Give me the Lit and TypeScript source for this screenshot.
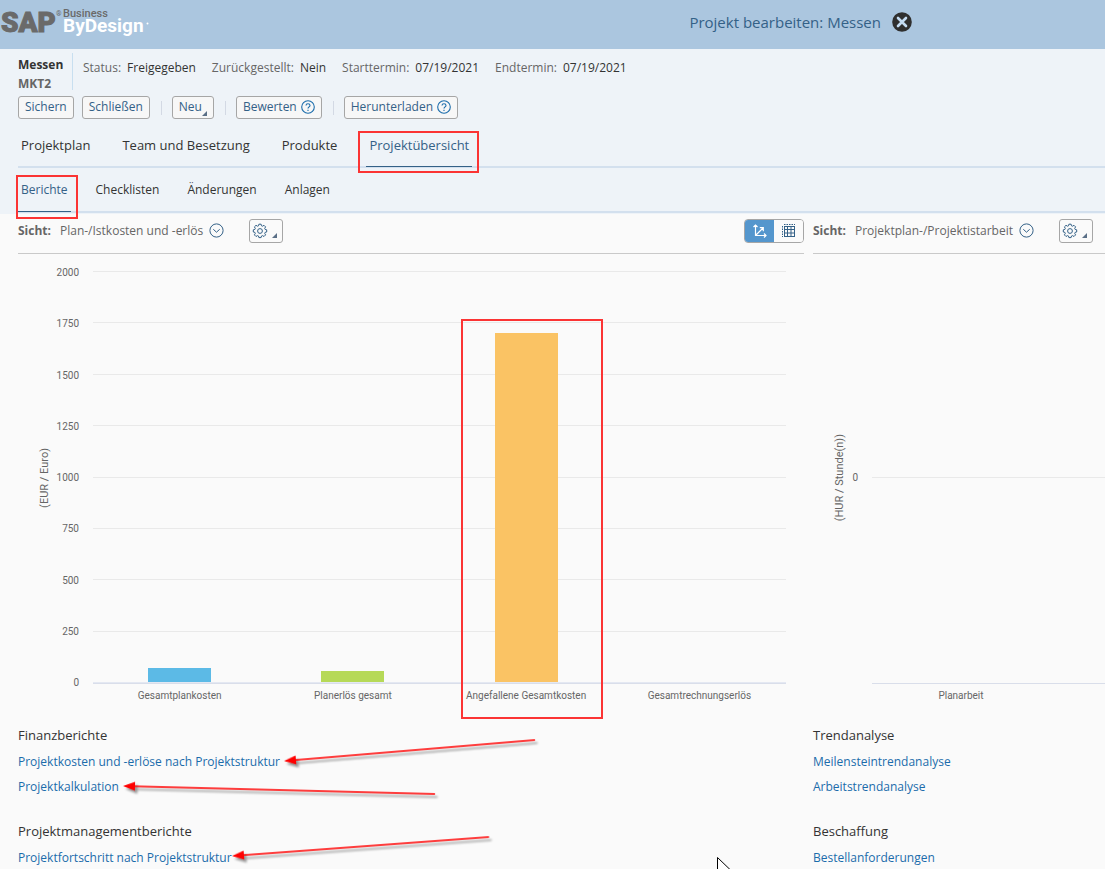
import { LitElement, html, css, svg } from "lit";
import { customElement, property } from "lit/decorators.js";
import { classMap } from "lit/directives/class-map.js";

const tick = svg`<path d="M5 0V5H0Z" fill="#5a6f86"/>`;

const gearIcon = html`<svg width="16" height="16" viewBox="0 0 16 16" fill="none" stroke="#346187" stroke-width="1" aria-hidden="true">
  <path stroke-linejoin="round" d="M6.9 1.2h2.2l.4 1.6 1 .4 1.5-.9 1.6 1.6-.9 1.5.4 1 1.6.4v2.2l-1.6.4-.4 1 .9 1.5-1.6 1.6-1.5-.9-1 .4-.4 1.6H6.9l-.4-1.6-1-.4-1.5.9-1.6-1.6.9-1.5-.4-1-1.6-.4V6.8l1.6-.4.4-1-.9-1.5L4 2.3l1.5.9 1-.4z"/>
  <circle cx="8" cy="8" r="2.4"/>
</svg>`;

const helpIcon = html`<svg width="14" height="14" viewBox="0 0 14 14" fill="none" stroke="#1b6cab" stroke-width="1.1" aria-hidden="true">
  <circle cx="7" cy="7" r="6.3"/>
  <path d="M5 5.4C5 3.2 9 3.2 9 5.4C9 6.8 7 6.9 7 8.5M7 9.7v1.2"/>
</svg>`;

const chevronIcon = html`<svg width="15" height="15" viewBox="0 0 15 15" fill="none" stroke="#346187" stroke-width="1" aria-hidden="true">
  <circle cx="7.5" cy="7.5" r="6.6"/>
  <path d="M4.3 6.3l3.2 2.9 3.2-2.9"/>
</svg>`;

interface Bar {
  name: string;
  value: number;
  color: string;
  marked?: boolean;
}

@customElement("bar-chart")
export class BarChart extends LitElement {
  @property({ attribute: false }) ticks: string[] = [];
  @property({ attribute: false }) bars: Bar[] = [];
  @property({ type: Number }) max = 1;
  @property() unit = "";
  @property({ type: Boolean, reflect: true }) fixed = false;

  static styles = css`
    :host {
      display: grid;
      grid-template-columns: 61px 1fr;
      font: 10px/12px Roboto, "Liberation Sans", sans-serif;
      color: #666;
      padding: 12px 18px 0 0;
    }
    :host([fixed]) { grid-template-columns: 45px 1fr; padding-right: 0; }
    .axis { display: grid; grid-template-columns: 1fr auto; align-self: start; padding-top: 1px; }
    .unit { writing-mode: vertical-rl; transform: rotate(180deg); justify-self: end; align-self: center; margin-right: 6px; white-space: nowrap; font-size: 11px; }
    .ticks { height: 422px; display: flex; flex-direction: column; justify-content: space-between; text-align: right; }
    .ticks.single { justify-content: center; }
    .plot { margin: 5px 0 0 14px; min-width: 0; }
    .area { display: grid; height: 412px; border-bottom: 1px solid #d9deea; }
    .lines, .bars { grid-area: 1 / 1; }
    .lines { display: flex; flex-direction: column; justify-content: space-between; }
    .lines.single { justify-content: center; }
    .line { height: 1px; background: #e9e9e9; }
    .line.base { background: #e4e8f2; }
    .bars, .names { display: grid; grid-auto-flow: column; grid-auto-columns: 1fr; }
    :host([fixed]) .names { grid-auto-columns: 178px; }
    .bars { align-items: end; justify-items: center; position: relative; padding-bottom: 1px; }
    .bar { width: 63px; }
    .name { text-align: center; position: relative; padding-top: 6px; white-space: nowrap; }
    .mark { position: absolute; left: 50%; margin-left: -65px; bottom: -17px; width: 138px; height: 396px; border: 2px solid #fb3434; pointer-events: none; }
  `;

  render() {
    const single = this.ticks.length === 1;
    return html`
      <div class="axis">
        <span class="unit">${this.unit}</span>
        <div class=${classMap({ ticks: true, single })}>${this.ticks.map((t) => html`<span>${t}</span>`)}</div>
      </div>
      <div class="plot">
        <div class="area">
          <div class=${classMap({ lines: true, single })}>
            ${this.ticks.map((t, i) => html`<div class=${classMap({ line: true, base: !single && i === this.ticks.length - 1 })}></div>`)}
          </div>
          <div class="bars">
            ${this.bars.map((b) => html`<div class="bar" style="height:${(b.value / this.max) * 100}%;background:${b.color}"></div>`)}
          </div>
        </div>
        <div class="names">
          ${this.bars.map((b) => html`<div class="name">${b.name}${b.marked ? html`<span class="mark"></span>` : ""}</div>`)}
        </div>
      </div>
    `;
  }
}

@customElement("report-links")
export class ReportLinks extends LitElement {
  @property() heading = "";
  @property({ attribute: false }) links: string[] = [];

  static styles = css`
    :host { display: block; color: #333; }
    h2 { margin: 0; font-size: 13px; line-height: 20px; font-weight: 400; }
    ul { list-style: none; margin: 4px 0 0; padding: 0; }
    li { line-height: 25px; white-space: nowrap; }
    a { color: #1b6cab; text-decoration: none; font-size: 12px; }
  `;

  render() {
    return html`<h2>${this.heading}</h2>
      <ul>${this.links.map((l) => html`<li><a href="#">${l}</a></li>`)}</ul>`;
  }
}

@customElement("app-root")
export class AppRoot extends LitElement {
  static styles = css`
    * { box-sizing: border-box; }
    :host {
      display: block;
      position: relative;
      height: 100vh;
      overflow: hidden;
      background: #fafafa;
      color: #333;
      font: 12px/18px "Open Sans", "Liberation Sans", sans-serif;
    }
    button { font: inherit; margin: 0; cursor: pointer; }
    svg { display: block; flex: none; }
    .shell { height: 49px; background: #abc6df; display: flex; justify-content: space-between; }
    .title { display: flex; align-items: center; gap: 11px; height: 44px; margin-right: 193px; }
    h1 { margin: 0; font-size: 15px; font-weight: 400; color: #346187; }
    .close { border: 0; padding: 0; background: none; }
    .head { background: #eef3f8; padding: 4px 0 0 18px; height: 165px; }
    .info { display: flex; height: 37px; }
    .ident { width: 55px; border-right: 1px solid #c8dff0; font-weight: 700; line-height: 19px; padding-top: 2px; }
    .sub { color: #666; }
    dl { display: flex; gap: 16px; margin: 6px 0 0 10px; }
    dl div { display: flex; gap: 6px; }
    dt { color: #666; }
    dd { margin: 0; }
    .actions { display: flex; gap: 8px; margin-top: 6px; align-items: center; }
    .btn { height: 23px; border: 1px solid #a6a6a6; border-radius: 3px; background: #f7f7f7; color: #346187; padding: 0 6px 2px; display: flex; align-items: center; gap: 4px; }
    .btn .tick { align-self: flex-end; margin-left: -4px; }
    .sep { width: 1px; height: 14px; background: #d3d9e4; margin: 0 2px 0 3px; }
    .tabs { display: flex; border-bottom: 2px solid #d3e0ee; }
    .tab { position: relative; color: #333; text-decoration: none; padding: 0 3px; }
    .tab.on { color: #346187; }
    .tab.on::after { content: ""; position: absolute; left: 0; right: 0; bottom: -1px; height: 1px; background: #346187; }
    .main { height: 49px; gap: 26px; font-size: 13px; line-height: 52px; }
    .second { height: 45px; gap: 22px; line-height: 44px; }
    .mark { position: absolute; border: 2px solid #fb3434; pointer-events: none; }
    .main .mark { inset: 12px -7px -7px -8px; }
    .second .mark { inset: 7px -7px -8px -2px; }
    .panels { display: grid; grid-template-columns: minmax(0, 786fr) minmax(0, 292fr); column-gap: 9px; padding-left: 18px; }
    .bar { height: 40px; display: flex; align-items: center; padding-bottom: 6px; border-bottom: 1px solid #c9c9c9; color: #666; white-space: nowrap; }
    .bar > b { margin-right: 9px; }
    .view { border: 0; padding: 0; background: none; color: #666; display: flex; align-items: center; gap: 6px; }
    .gear { width: 34px; height: 24px; margin-left: 25px; padding: 0 5px 0 2px; border: 1px solid #a6a6a6; border-radius: 3px; background: #fafafa; display: flex; align-items: center; justify-content: space-between; }
    .gear .tick { align-self: flex-end; margin-bottom: 4px; }
    .switch { display: flex; margin-left: auto; width: 60px; height: 24px; border: 1px solid #a6a6a6; border-radius: 4px; overflow: hidden; }
    .switch button { flex: 1; border: 0; padding: 0; background: #fafafa; display: grid; place-items: center; }
    .switch .on { background: #5496cd; }
    .groups { display: flex; flex-direction: column; gap: 22px; margin-top: 23px; }
    .arrows { position: absolute; left: 0; top: 725px; pointer-events: none; }
  `;

  private gear() {
    return html`<button class="gear" aria-label="Einstellungen">${gearIcon}<svg class="tick" width="5" height="5">${tick}</svg></button>`;
  }

  private arrow(x1: number, y1: number, x2: number, y2: number) {
    const d = Math.hypot(x2 - x1, y2 - y1);
    const a = (Math.atan2(y2 - y1, x2 - x1) * 180) / Math.PI;
    return svg`<g transform="translate(${x1} ${y1}) rotate(${a})"><path d="M0 0L12 -4.5V-.8H${d}V.8H12V4.5Z"/></g>`;
  }

  render() {
    const cost: Bar[] = [
      { name: "Gesamtplankosten", value: 68, color: "#5cbae6" },
      { name: "Planerlös gesamt", value: 54, color: "#b6d957" },
      { name: "Angefallene Gesamtkosten", value: 1697, color: "#fac364", marked: true },
      { name: "Gesamtrechnungserlös", value: 0, color: "#8cd3ff" },
    ];
    const costTicks = ["2000", "1750", "1500", "1250", "1000", "750", "500", "250", "0"];
    return html`
      <header class="shell">
        <svg width="160" height="49" viewBox="0 0 160 49" font-family="Roboto, sans-serif" font-weight="700" role="img" aria-label="SAP Business ByDesign">
          <text x="1" y="32" font-size="28" font-weight="900" fill="#6a6a6a" stroke="#6a6a6a" stroke-width="1">SAP</text>
          <text x="56" y="16" font-size="7" fill="#6a6a6a">®</text>
          <text x="63" y="17" font-size="11" font-weight="500" fill="#6a6a6a">Business</text>
          <text x="63" y="32" font-size="19" fill="#fff">ByDesign</text>
          <circle cx="147.5" cy="23.5" r="1" fill="#fff"/>
        </svg>
        <div class="title">
          <h1>Projekt bearbeiten: Messen</h1>
          <button class="close" aria-label="Schließen">
            <svg width="20" height="20" viewBox="0 0 20 20"><circle cx="10" cy="10" r="9.8" fill="#2f2f2f"/><path d="M6 6l8 8M14 6l-8 8" stroke="#c4dcf2" stroke-width="2.6" stroke-linecap="round"/></svg>
          </button>
        </div>
      </header>
      <section class="head">
        <div class="info">
          <div class="ident"><div>Messen</div><div class="sub">MKT2</div></div>
          <dl>
            <div><dt>Status:</dt><dd>Freigegeben</dd></div>
            <div><dt>Zurückgestellt:</dt><dd>Nein</dd></div>
            <div><dt>Starttermin:</dt><dd>07/19/2021</dd></div>
            <div><dt>Endtermin:</dt><dd>07/19/2021</dd></div>
          </dl>
        </div>
        <div class="actions">
          <button class="btn">Sichern</button>
          <button class="btn">Schließen</button>
          <span class="sep"></span>
          <button class="btn">Neu<svg class="tick" width="5" height="5">${tick}</svg></button>
          <span class="sep"></span>
          <button class="btn">Bewerten ${helpIcon}</button>
          <span class="sep"></span>
          <button class="btn">Herunterladen ${helpIcon}</button>
        </div>
        <nav class="tabs main">
          <a class="tab" href="#">Projektplan</a>
          <a class="tab" href="#">Team und Besetzung</a>
          <a class="tab" href="#">Produkte</a>
          <a class="tab on" href="#">Projektübersicht<span class="mark"></span></a>
        </nav>
        <nav class="tabs second">
          <a class="tab on" href="#">Berichte<span class="mark"></span></a>
          <a class="tab" href="#">Checklisten</a>
          <a class="tab" href="#">Änderungen</a>
          <a class="tab" href="#">Anlagen</a>
        </nav>
      </section>
      <main class="panels">
        <section>
          <div class="bar">
            <b>Sicht:</b>
            <button class="view">Plan-/Istkosten und -erlös ${chevronIcon}</button>
            ${this.gear()}
            <div class="switch">
              <button class="on" aria-label="Diagramm">
                <svg width="16" height="16" viewBox="0 0 16 16" fill="none" stroke="#fff" stroke-width="1.2"><path d="M3.5 2V12.5H14M1.5 4L3.5 2L5.5 4M12 10.5L14 12.5L12 14.5M3.5 12.5L11 5M7.8 4.7H11.3V8.2"/></svg>
              </button>
              <button aria-label="Tabelle">
                <svg width="15" height="15" viewBox="0 0 15 15" fill="none" stroke="#346187"><path d="M3.5 3V13.5M6.5 3V14M10 3V14M13.5 3V14M3 6.5H14M3 10H14M3 3.5H14M3 13.5H14"/><path stroke-dasharray="1.5 1" d="M1.5 3V14M3 1.5H14"/></svg>
              </button>
            </div>
          </div>
          <bar-chart .ticks=${costTicks} .bars=${cost} .max=${2000} unit="(EUR / Euro)"></bar-chart>
          <div class="groups">
            <report-links heading="Finanzberichte" .links=${["Projektkosten und -erlöse nach Projektstruktur", "Projektkalkulation"]}></report-links>
            <report-links heading="Projektmanagementberichte" .links=${["Projektfortschritt nach Projektstruktur"]}></report-links>
          </div>
        </section>
        <section>
          <div class="bar">
            <b>Sicht:</b>
            <button class="view">Projektplan-/Projektistarbeit ${chevronIcon}</button>
            ${this.gear()}
          </div>
          <bar-chart fixed .ticks=${["0"]} .bars=${[{ name: "Planarbeit", value: 0, color: "#5cbae6" }]} unit="(HUR / Stunde(n))"></bar-chart>
          <div class="groups">
            <report-links heading="Trendanalyse" .links=${["Meilensteintrendanalyse", "Arbeitstrendanalyse"]}></report-links>
            <report-links heading="Beschaffung" .links=${["Bestellanforderungen"]}></report-links>
          </div>
        </section>
      </main>
      <svg class="arrows" width="740" height="144" viewBox="0 725 740 144" aria-hidden="true">
        <defs>
          <filter id="blur" filterUnits="userSpaceOnUse" x="0" y="700" width="740" height="200"><feGaussianBlur stdDeviation="1.2"/></filter>
        </defs>
        <g fill="#000" opacity=".4" transform="translate(2.5 3)" filter="url(#blur)">
          ${this.arrow(284, 761, 535, 740)}
          ${this.arrow(123, 786, 435, 794)}
          ${this.arrow(232, 856, 489, 837)}
        </g>
        <g fill="#f00">
          ${this.arrow(284, 761, 535, 740)}
          ${this.arrow(123, 786, 435, 794)}
          ${this.arrow(232, 856, 489, 837)}
        </g>
        <path d="M717.5 857.5V873L721 870L723.5 875L730.5 870Z" fill="#fff" stroke="#000"/>
      </svg>
    `;
  }
}
